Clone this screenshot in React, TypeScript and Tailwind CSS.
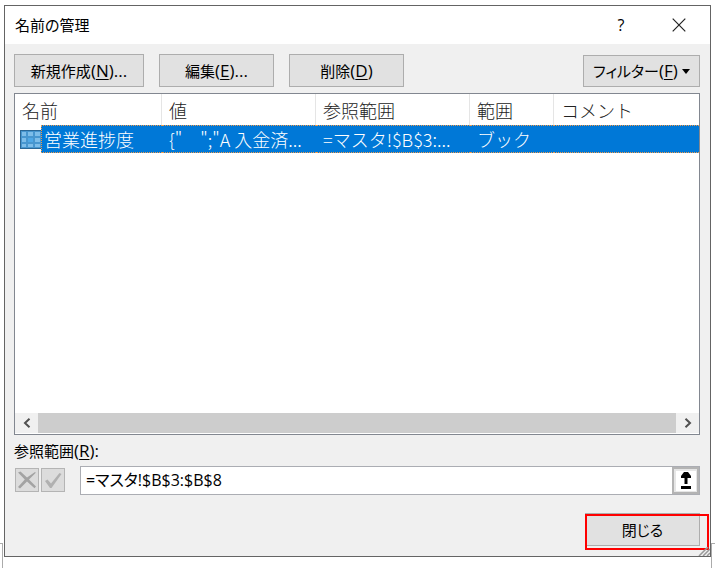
import clsx from "clsx";
import { useState } from "react";
import type { ReactNode } from "react";

interface NamedRange {
  name: string;
  value: string;
  refersTo: string;
  scope: string;
  comment: string;
}

interface DialogButtonProps {
  children: ReactNode;
  className?: string;
}

interface AccessKeyProps {
  letter: string;
  suffix?: string;
}

const namedRanges: NamedRange[] = [
  {
    name: "営業進捗度",
    value: '{"\u3000";"A 入金済...',
    refersTo: "=マスタ!$B$3:...",
    scope: "ブック",
    comment: "",
  },
];

const DialogButton = ({ children, className }: DialogButtonProps) => (
  <button
    type="button"
    className={clsx(
      "flex items-center justify-center border border-[#adadad] bg-[#e1e1e1] whitespace-nowrap",
      className,
    )}
  >
    {children}
  </button>
);

// Latin letters run a little larger than the kanji beside them
const AccessKey = ({ letter, suffix }: AccessKeyProps) => (
  <span className="text-[17px]">
    (<span className="underline underline-offset-2">{letter}</span>){suffix}
  </span>
);

const RangeIcon = () => (
  <svg width="21" height="19" viewBox="0 0 21 19" className="block">
    <rect width="21" height="19" fill="#2a6796" />
    <rect x="1" y="1" width="20" height="17" fill="#4796cf" />
    <path
      d="M2 2h4v4H2zM8 2h5v4H8zM15 2h5v4h-5zM2 8h4v4H2zM15 8h5v4h-5zM2 14h4v3H2zM8 14h5v3H8zM15 14h5v3h-5z"
      fill="#7dbde9"
    />
    <rect x="8" y="8" width="5" height="4" fill="#4fa8e6" />
  </svg>
);

const TitleBar = () => (
  <header className="flex h-[38px] items-center bg-white pr-6 pl-[10px]">
    <h1 className="flex-1">名前の管理</h1>
    <button type="button" aria-label="ヘルプ" className="mr-[43px] w-4 text-base">
      ?
    </button>
    <button type="button" aria-label="閉じる">
      <svg width="14" height="14" viewBox="0 0 14 14" fill="none" stroke="#222">
        <path d="M.7.7l12.6 12.6M13.3.7L.7 13.3" strokeWidth="1.2" />
      </svg>
    </button>
  </header>
);

const Toolbar = () => (
  <div className="flex items-end gap-[15px]">
    <DialogButton className="h-[33px] w-[130px]">
      新規作成
      <AccessKey letter="N" suffix="..." />
    </DialogButton>
    <DialogButton className="h-[33px] w-[115px]">
      編集
      <AccessKey letter="E" suffix="..." />
    </DialogButton>
    <DialogButton className="h-[33px] w-[115px]">
      削除
      <AccessKey letter="D" />
    </DialogButton>
    <DialogButton className="ml-auto h-8 w-[117px] gap-1">
      <span>
        フィルター
        <AccessKey letter="F" />
      </span>
      <svg width="8" height="5" viewBox="0 0 8 5">
        <path d="M0 0h8L4 5z" fill="#000" />
      </svg>
    </DialogButton>
  </div>
);

const NameList = () => {
  const headerCell =
    "h-[31px] border-r border-[#e5e5e5] pl-[7px] text-left font-light text-[#222]";
  const cell =
    "h-7 overflow-hidden border-y border-dotted border-[#f09a4a] bg-[#0078d7] pl-[7px] font-light text-white";

  return (
    <div className="mt-[6px] border border-[#828790] bg-white">
      <div className="h-[319px] overflow-hidden">
        <table className="w-full table-fixed border-separate border-spacing-0 font-['Noto_Sans_CJK_JP',sans-serif] text-lg leading-6 whitespace-nowrap [font-feature-settings:normal]">
          <colgroup>
            <col className="w-[26px]" />
            <col className="w-[121px]" />
            <col className="w-[154px]" />
            <col className="w-[154px]" />
            <col className="w-[84px]" />
            <col />
          </colgroup>
          <thead>
            <tr>
              <th colSpan={2} className={headerCell}>
                名前
              </th>
              <th className={headerCell}>値</th>
              <th className={headerCell}>参照範囲</th>
              <th className={headerCell}>範囲</th>
              <th className="pl-[7px] text-left font-light text-[#222]">コメント</th>
            </tr>
          </thead>
          <tbody>
            {namedRanges.map((range) => (
              <tr key={range.name}>
                <td className="pl-[5px]">
                  <RangeIcon />
                </td>
                <td className="h-7 border border-r-0 border-dotted border-[#f09a4a] bg-[#0078d7] pl-[2px] font-light text-white">
                  {range.name}
                </td>
                <td className={cell}>{range.value}</td>
                <td className={cell}>{range.refersTo}</td>
                <td className={cell}>{range.scope}</td>
                <td className={cell}>{range.comment}</td>
              </tr>
            ))}
          </tbody>
        </table>
      </div>
      <div className="flex h-[21px] items-center border-b border-white bg-[#f0f0f0]">
        <button
          type="button"
          aria-label="左へスクロール"
          className="flex w-[23px] justify-center"
        >
          <svg width="8" height="10" viewBox="0 0 8 10" fill="none" stroke="#505050">
            <path d="M6.5.8L2 5l4.500 4.200" strokeWidth="2" />
          </svg>
        </button>
        <div className="h-full flex-1 bg-[#cdcdcd]" />
        <button
          type="button"
          aria-label="右へスクロール"
          className="flex w-[23px] justify-center"
        >
          <svg width="8" height="10" viewBox="0 0 8 10" fill="none" stroke="#505050">
            <path d="M1.500.8L6 5 1.500 9.200" strokeWidth="2" />
          </svg>
        </button>
      </div>
    </div>
  );
};

const ReferenceEditor = () => {
  const [reference, setReference] = useState("=マスタ!$B$3:$B$8");
  const smallButton =
    "flex size-6 items-center justify-center border border-[#b4b4b4] bg-[#dcdcdc]";

  return (
    <div className="mt-[6px]">
      <label htmlFor="reference" className="block h-[25px] leading-5">
        参照範囲
        <AccessKey letter="R" suffix=":" />
      </label>
      <div className="flex">
        <div className="mr-[15px] flex gap-[2px] pt-[2px] pl-px">
          <button type="button" aria-label="キャンセル" className={smallButton}>
            <svg width="20" height="18" viewBox="0 0 20 18" fill="#a3a3a3">
              <path d="M1 1.500L3.500.5 10 6.500 18 1l.8.8L12 8.500l7 7-1.500 1.800L10 10.500 3 17.500 1 16l6.800-7.400z" />
            </svg>
          </button>
          <button type="button" aria-label="入力" className={smallButton}>
            <svg width="18" height="17" viewBox="0 0 18 17" fill="#b0b0b0">
              <path d="M1 9l2.500-1.500L7 11.500 15.500 1l2 1L7.500 16H6z" />
            </svg>
          </button>
        </div>
        <div className="flex h-[29px] flex-1 border border-[#abadb3] bg-white">
          <input
            id="reference"
            value={reference}
            onChange={(event) => setReference(event.target.value)}
            className="min-w-0 flex-1 pb-[2px] pl-[5px] text-base outline-none"
          />
          <button
            type="button"
            aria-label="範囲を選択"
            className="flex w-[27px] items-center justify-center border-2 border-[#b4b4b4] bg-[#e6e6e6]"
          >
            <span className="flex size-5 items-center justify-center bg-white">
              <svg width="12" height="17" viewBox="0 0 12 17" fill="#000">
                <path d="M4 0h4l3 4v2H7.500v6h-3V6H1V4zM1 14h10v3H1z" />
              </svg>
            </span>
          </button>
        </div>
      </div>
    </div>
  );
};

const App = () => (
  <div
    lang="ja"
    className="relative min-h-screen bg-white px-1 pt-[5px] font-['Open_Sans','Noto_Sans_CJK_JP',sans-serif] text-[15px] leading-5 text-black [font-feature-settings:'palt']"
  >
    <div className="absolute top-[543px] bottom-0 left-0 w-[3px] border-t border-r border-[#ababab]" />
    <div className="absolute top-[543px] right-0 bottom-0 w-1 border-t border-l border-[#ababab]" />
    <main className="relative border border-[#646464] bg-[#f0f0f0]">
      <TitleBar />
      <div className="pt-[10px] pr-[10px] pb-[10px] pl-[9px]">
        <Toolbar />
        <NameList />
        <ReferenceEditor />
        <div className="mt-[18px] flex justify-end">
          <div className="relative">
            <DialogButton className="h-[33px] w-[115px]">閉じる</DialogButton>
            <div className="pointer-events-none absolute top-px -right-[9px] -bottom-1 left-0 border-2 border-[#ff0000]" />
          </div>
        </div>
      </div>
      <svg
        width="12"
        height="9"
        viewBox="0 0 12 9"
        className="absolute right-0 bottom-0"
        fill="none"
        stroke="#999"
        strokeWidth="1.500"
      >
        <path d="M1 9l9-9M5 9l7-7M9 9l3-3" />
      </svg>
    </main>
  </div>
);

export default App;
